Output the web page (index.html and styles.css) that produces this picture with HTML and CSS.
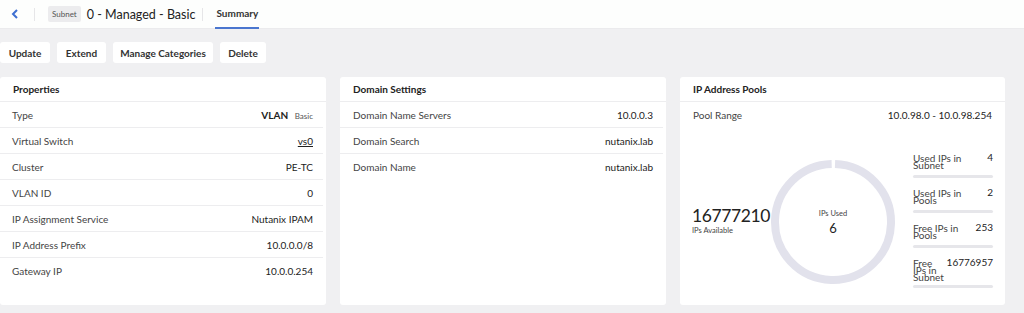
FILE: index.html
```html
<!DOCTYPE html>
<html lang="en">
<head>
    <meta charset="UTF-8">
    <meta name="viewport" content="width=device-width, initial-scale=1.0">
    <title>Subnet Summary</title>
    <link rel="stylesheet" href="styles.css">
</head>
<body>
    <div class="header">
        <div class="back">
            <svg width="8" height="10" viewBox="0 0 8 10"><path d="M6 1 L2 5 L6 9" fill="none" stroke="#3d6fd1" stroke-width="2"/></svg>
        </div>
        <span class="sep"></span>
        <span class="badge">Subnet</span>
        <span class="title">0 - Managed - Basic</span>
        <span class="sep sep2"></span>
        <span class="tab">Summary</span>
    </div>
    <div class="toolbar">
        <button class="b-update">Update</button>
        <button class="b-extend">Extend</button>
        <button class="b-manage">Manage Categories</button>
        <button class="b-delete">Delete</button>
    </div>
    <div class="panels">
        <div class="panel">
            <div class="panel-head">Properties</div>
            <div class="row"><span>Type</span><span class="val"><b>VLAN</b> <small>Basic</small></span></div>
            <div class="row"><span>Virtual Switch</span><span class="val link">vs0</span></div>
            <div class="row"><span>Cluster</span><span class="val">PE-TC</span></div>
            <div class="row"><span>VLAN ID</span><span class="val">0</span></div>
            <div class="row"><span>IP Assignment Service</span><span class="val">Nutanix IPAM</span></div>
            <div class="row"><span>IP Address Prefix</span><span class="val">10.0.0.0/8</span></div>
            <div class="row last"><span>Gateway IP</span><span class="val">10.0.0.254</span></div>
        </div>
        <div class="panel">
            <div class="panel-head">Domain Settings</div>
            <div class="row"><span>Domain Name Servers</span><span class="val">10.0.0.3</span></div>
            <div class="row"><span>Domain Search</span><span class="val">nutanix.lab</span></div>
            <div class="row last"><span>Domain Name</span><span class="val">nutanix.lab</span></div>
        </div>
        <div class="panel">
            <div class="panel-head">IP Address Pools</div>
            <div class="row last"><span>Pool Range</span><span class="val">10.0.98.0 - 10.0.98.254</span></div>
            <div class="chart">
                <div class="avail">
                    <div class="big">16777210</div>
                    <div class="tiny">IPs Available</div>
                </div>
                <div class="donut">
                    <svg width="130" height="130" viewBox="0 0 130 130">
                        <circle cx="65" cy="65" r="58" fill="none" stroke="#e2e2ec" stroke-width="8" stroke-dasharray="360.4 4" transform="rotate(-88 65 65)"/>
                    </svg>
                    <div class="donut-text">
                        <div class="tiny">IPs Used</div>
                        <div class="mid">6</div>
                    </div>
                </div>
                <div class="stats">
                    <div class="stat"><div class="stat-row"><span class="lbl">Used IPs in Subnet</span><span class="num">4</span></div><div class="bar"></div></div>
                    <div class="stat"><div class="stat-row"><span class="lbl">Used IPs in Pools</span><span class="num">2</span></div><div class="bar"></div></div>
                    <div class="stat"><div class="stat-row"><span class="lbl">Free IPs in Pools</span><span class="num">253</span></div><div class="bar"></div></div>
                    <div class="stat"><div class="stat-row tall"><span class="lbl narrow">Free IPs in Subnet</span><span class="num">16776957</span></div><div class="bar"></div></div>
                </div>
            </div>
        </div>
    </div>
</body>
</html>
```

FILE: styles.css
```css
* {
    padding: 0;
    margin: 0;
    box-sizing: border-box;
}
body {
    background-color: #f0f0f2;
    font-family: Lato, "Liberation Sans", sans-serif;
    color: #333;
    font-size: 10px;
}
.header {
    height: 29px;
    background-color: #fdfefd;
    border-bottom: 1px solid #ebebed;
    display: flex;
    align-items: center;
}
.back {
    width: 34px;
    padding-left: 11px;
    display: flex;
    align-items: center;
}
.sep {
    width: 1px;
    height: 13px;
    background-color: #e6e6e8;
}
.sep2 {
    margin-left: 7px;
}
.badge {
    margin-left: 13px;
    background-color: #ececee;
    color: #555;
    font-size: 8px;
    padding: 3px 4px;
    border-radius: 2px;
}
.title {
    margin-left: 6px;
    font-size: 12.5px;
    color: #222;
}
.tab {
    margin-left: 12px;
    height: 29px;
    line-height: 27px;
    font-weight: 700;
    color: #333;
    border-bottom: 2px solid #4a76cf;
    padding: 0 1px;
}
.toolbar {
    display: flex;
    gap: 7px;
    padding-top: 13px;
}
.toolbar button {
    height: 21px;
    background-color: #fff;
    border: none;
    border-radius: 3px;
    font-family: Lato, "Liberation Sans", sans-serif;
    font-size: 10px;
    font-weight: 700;
    color: #333;
    padding: 0;
}
.b-update {
    width: 50px;
}
.b-extend {
    width: 49px;
}
.b-manage {
    width: 100px;
}
.b-delete {
    width: 46px;
}
.panels {
    display: grid;
    grid-template-columns: 326px 326px 325px;
    gap: 14px;
    margin-top: 14px;
}
.panel {
    background-color: #fff;
    height: 228px;
    border-radius: 3px;
}
.panel-head {
    height: 25px;
    line-height: 25px;
    padding: 0 13px;
    font-weight: 700;
    color: #222;
    border-bottom: 1px solid #ededef;
}
.row {
    height: 26px;
    margin: 0 3px 0 0;
    padding: 0 10px 0 12px;
    display: flex;
    justify-content: space-between;
    align-items: center;
    border-bottom: 1px solid #ededef;
    color: #444;
}
.panel + .panel .row {
    padding-left: 13px;
}
.row.last {
    border-bottom: none;
}
.val {
    color: #222;
}
.val b {
    font-weight: 700;
}
.val small {
    font-size: 8px;
    color: #555;
    margin-left: 4px;
}
.link {
    text-decoration: underline;
}
.chart {
    display: grid;
    grid-template-columns: 61px 130px 80px;
    gap: 15px;
    padding: 24px 12px 0 12px;
    align-items: center;
}
.avail {
    white-space: nowrap;
}
.big {
    font-size: 17.5px;
    letter-spacing: -0.4px;
    color: #222;
    line-height: 20px;
}
.tiny {
    font-size: 7.5px;
    color: #444;
}
.donut {
    position: relative;
    height: 130px;
    align-self: start;
    margin-top: 5px;
}
.donut-text {
    position: absolute;
    top: 0;
    left: 0;
    width: 130px;
    height: 130px;
    display: flex;
    flex-direction: column;
    align-items: center;
    justify-content: center;
    gap: 2px;
}
.mid {
    font-size: 13px;
    color: #222;
}
.stats {
    display: flex;
    flex-direction: column;
    gap: 9px;
    align-self: start;
}
.stat-row {
    display: flex;
    justify-content: space-between;
    align-items: flex-start;
    height: 23px;
}
.stat-row.tall {
    height: 28px;
}
.lbl {
    width: 52px;
    line-height: 7px;
    padding-top: 3px;
    color: #444;
}
.lbl.narrow {
    width: 30px;
}
.num {
    color: #222;
    line-height: 11px;
}
.bar {
    height: 3px;
    background-color: #e6e6ea;
    border-radius: 2px;
}
```
